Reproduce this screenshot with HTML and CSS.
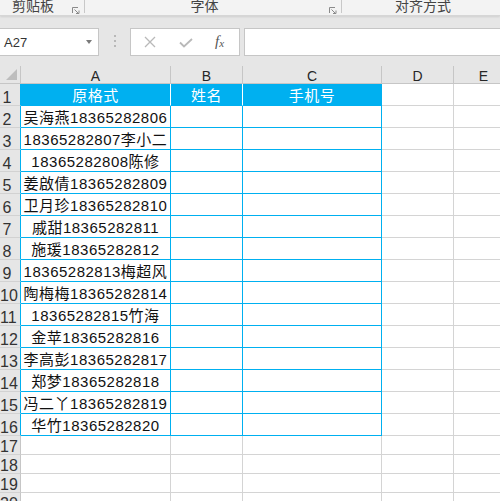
FILE: index.html
```html
<!DOCTYPE html>
<html lang="zh">
<head>
<meta charset="utf-8">
<title>Excel</title>
<link rel="stylesheet" href="styles.css">
</head>
<body>
<div class="app">
  <div class="ribbon">
    <div class="group g1">
      <span class="label">剪贴板</span>
      <svg class="launcher" width="8" height="7" viewBox="0 0 8 7"><path d="M0.5 6V0.5H6" fill="none" stroke="#8a8a8a"/><path d="M2.5 2.5L6.5 6.5M7 3.5V6.5H4" fill="none" stroke="#8a8a8a"/></svg>
    </div>
    <div class="group g2">
      <span class="label">字体</span>
      <svg class="launcher" width="8" height="7" viewBox="0 0 8 7"><path d="M0.5 6V0.5H6" fill="none" stroke="#8a8a8a"/><path d="M2.5 2.5L6.5 6.5M7 3.5V6.5H4" fill="none" stroke="#8a8a8a"/></svg>
    </div>
    <div class="group g3">
      <span class="label">对齐方式</span>
    </div>
  </div>

  <div class="fbar">
    <div class="namebox">
      <span class="ref">A27</span>
      <span class="caret"></span>
    </div>
    <div class="dots"><i></i><i></i><i></i></div>
    <div class="fxbox">
      <svg class="ico" width="12" height="12" viewBox="0 0 12 12"><path d="M1 1L11 11M11 1L1 11" stroke="#b9b9b9" stroke-width="1.3" fill="none"/></svg>
      <svg class="ico" width="14" height="10" viewBox="0 0 14 10"><path d="M1 4.5L5 8.5L13 1" stroke="#b9b9b9" stroke-width="1.8" fill="none"/></svg>
      <span class="fx">f<sub>x</sub></span>
    </div>
    <div class="finput"></div>
  </div>

  <div class="grid">
    <div class="corner"><span class="tri"></span></div>
    <div class="hc">A</div><div class="hc">B</div><div class="hc">C</div><div class="hc">D</div><div class="hc">E</div>

    <div class="rh bl"><span>1</span></div>
    <div class="h">原格式</div><div class="h">姓名</div><div class="h hlast">手机号</div><div class="c"></div><div class="c"></div>

    <div class="rh bl"><span>2</span></div>
    <div class="b">吴海燕18365282806</div><div class="b"></div><div class="b"></div><div class="c"></div><div class="c"></div>

    <div class="rh bl"><span>3</span></div>
    <div class="b">18365282807李小二</div><div class="b"></div><div class="b"></div><div class="c"></div><div class="c"></div>

    <div class="rh bl"><span>4</span></div>
    <div class="b">18365282808陈修</div><div class="b"></div><div class="b"></div><div class="c"></div><div class="c"></div>

    <div class="rh bl"><span>5</span></div>
    <div class="b">姜啟倩18365282809</div><div class="b"></div><div class="b"></div><div class="c"></div><div class="c"></div>

    <div class="rh bl"><span>6</span></div>
    <div class="b">卫月珍18365282810</div><div class="b"></div><div class="b"></div><div class="c"></div><div class="c"></div>

    <div class="rh bl"><span>7</span></div>
    <div class="b">戚甜18365282811</div><div class="b"></div><div class="b"></div><div class="c"></div><div class="c"></div>

    <div class="rh bl"><span>8</span></div>
    <div class="b">施瑗18365282812</div><div class="b"></div><div class="b"></div><div class="c"></div><div class="c"></div>

    <div class="rh bl"><span>9</span></div>
    <div class="b">18365282813梅超风</div><div class="b"></div><div class="b"></div><div class="c"></div><div class="c"></div>

    <div class="rh bl"><span>10</span></div>
    <div class="b">陶梅梅18365282814</div><div class="b"></div><div class="b"></div><div class="c"></div><div class="c"></div>

    <div class="rh bl"><span>11</span></div>
    <div class="b">18365282815竹海</div><div class="b"></div><div class="b"></div><div class="c"></div><div class="c"></div>

    <div class="rh bl"><span>12</span></div>
    <div class="b">金苹18365282816</div><div class="b"></div><div class="b"></div><div class="c"></div><div class="c"></div>

    <div class="rh bl"><span>13</span></div>
    <div class="b">李高彭18365282817</div><div class="b"></div><div class="b"></div><div class="c"></div><div class="c"></div>

    <div class="rh bl"><span>14</span></div>
    <div class="b">郑梦18365282818</div><div class="b"></div><div class="b"></div><div class="c"></div><div class="c"></div>

    <div class="rh bl"><span>15</span></div>
    <div class="b">冯二丫18365282819</div><div class="b"></div><div class="b"></div><div class="c"></div><div class="c"></div>

    <div class="rh bl"><span>16</span></div>
    <div class="b">华竹18365282820</div><div class="b"></div><div class="b"></div><div class="c"></div><div class="c"></div>

    <div class="rh"><span>17</span></div>
    <div class="c"></div><div class="c"></div><div class="c"></div><div class="c"></div><div class="c"></div>

    <div class="rh"><span>18</span></div>
    <div class="c"></div><div class="c"></div><div class="c"></div><div class="c"></div><div class="c"></div>

    <div class="rh"><span>19</span></div>
    <div class="c"></div><div class="c"></div><div class="c"></div><div class="c"></div><div class="c"></div>

    <div class="rh"><span>20</span></div>
    <div class="c"></div><div class="c"></div><div class="c"></div><div class="c"></div><div class="c"></div>
  </div>
</div>
</body>
</html>
```

FILE: styles.css
```css
* { box-sizing: border-box; }
html, body { margin: 0; padding: 0; }
body {
  width: 500px;
  height: 501px;
  overflow: hidden;
  background: #e6e6e6;
  font-family: "Liberation Sans", "Noto Sans CJK SC", sans-serif;
}
.app { width: 500px; height: 501px; overflow: hidden; }

/* ribbon */
.ribbon {
  height: 16px;
  display: flex;
  background: #f3f3f3;
  border-bottom: 1px solid #d6d6d6;
  box-shadow: 0 1px 2px rgba(0,0,0,0.10);
  position: relative;
  z-index: 1;
}
.group {
  position: relative;
  height: 15px;
  display: flex;
  align-items: flex-start;
  font-size: 14px;
  line-height: 13px;
  color: #444;
}
.g1 { width: 85px; border-right: 1px solid #c8c8c8; height: 13px; padding-left: 12px; }
.g2 { width: 257px; border-right: 1px solid #c8c8c8; height: 13px; justify-content: center; padding-right: 17px; }
.g3 { flex: 1; padding-left: 53px; }
.launcher { position: absolute; top: 7px; right: 4px; }
.g2 .launcher { right: 4px; }

/* formula bar */
.fbar {
  height: 50px;
  display: flex;
  align-items: flex-start;
  padding-top: 12px;
}
.namebox {
  margin-left: -1px;
  width: 100px;
  height: 28px;
  background: #fff;
  border: 1px solid #c6c6c6;
  display: flex;
  align-items: center;
  padding-left: 4px;
  position: relative;
}
.ref { font-size: 13px; color: #333; line-height: 14px; padding-top: 2px; }
.caret {
  position: absolute;
  left: 86px;
  top: 11px;
  width: 0; height: 0;
  border-left: 3px solid transparent;
  border-right: 3px solid transparent;
  border-top: 4px solid #7a7a7a;
}
.dots {
  width: 31px;
  height: 28px;
  display: flex;
  flex-direction: column;
  align-items: center;
  padding-top: 7px;
  gap: 3px;
}
.dots i { display: block; width: 2px; height: 2px; background: #b8b8b8; }
.fxbox {
  width: 110px;
  height: 28px;
  background: #fff;
  border: 1px solid #c6c6c6;
  display: flex;
  align-items: center;
  padding-left: 13px;
}
.fxbox .ico:nth-child(1) { margin-top: 0px; }
.fxbox .ico:nth-child(2) { margin-left: 23px; margin-top: 2px; }
.fx {
  margin-left: 22px;
  font-family: "Liberation Serif", serif;
  font-style: italic;
  font-size: 15px;
  color: #555;
  line-height: 14px;
}
.fx sub { font-size: 11px; vertical-align: -1px; }
.finput {
  margin-left: 4px;
  flex: 1;
  height: 28px;
  background: #fff;
  border: 1px solid #c6c6c6;
  border-right: none;
}

/* sheet */
.grid {
  display: grid;
  grid-template-columns: 21px 150px 72px 139px 72px 60px;
  grid-template-rows: 18px repeat(16, 22px) repeat(4, 19px);
  background: #fff;
  width: 514px;
}
.corner {
  background: #e6e6e6;
  border-right: 1px solid #c6c6c6;
  border-bottom: 1px solid #c6c6c6;
  position: relative;
}
.tri {
  position: absolute;
  right: 3px;
  bottom: 3px;
  width: 0; height: 0;
  border-left: 11px solid transparent;
  border-bottom: 11px solid #bdbdbd;
}
.hc {
  background: #e6e6e6;
  border-right: 1px solid #c6c6c6;
  border-bottom: 1px solid #c6c6c6;
  display: flex;
  align-items: flex-end;
  justify-content: center;
  font-size: 14px;
  line-height: 14px;
  color: #262626;
}
.rh {
  background: #e6e6e6;
  border-right: 1px solid #c6c6c6;
  border-bottom: 1px solid #d2d2d2;
  display: flex;
  align-items: flex-end;
  font-size: 16px;
  line-height: 15px;
  color: #333;
  overflow: hidden;
}
.rh span { display: block; width: 14px; text-align: center; white-space: nowrap; flex: none; }
.rh.bl { border-right-color: #00b0f0; }
.c {
  border-right: 1px solid #d4d4d4;
  border-bottom: 1px solid #d4d4d4;
}
.b, .h {
  display: flex;
  align-items: flex-end;
  justify-content: center;
  font-size: 15px;
  line-height: 18px;
  letter-spacing: 0.5px;
  white-space: nowrap;
  color: #111;
  border-right: 1px solid #00b0f0;
  border-bottom: 1px solid #00b0f0;
}
.h {
  background: #00b0f0;
  color: #fff;
  border-right-color: #fff;
}
.h.hlast { border-right-color: #00b0f0; }
```
